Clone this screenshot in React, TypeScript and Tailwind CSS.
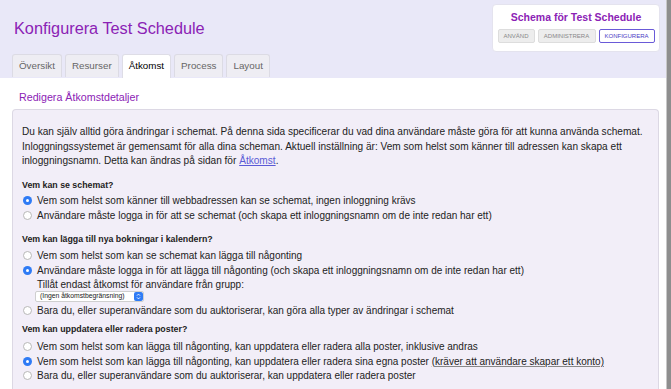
import React from "react";

const font = { fontFamily: '"Liberation Sans", Arial, sans-serif' };

function Radio({ checked }: { checked?: boolean }) {
  if (checked) {
    return (
      <span className="flex h-[9px] w-[9px] shrink-0 items-center justify-center rounded-full bg-[#2f7bf5]">
        <span className="h-[3px] w-[3px] rounded-full bg-white" />
      </span>
    );
  }
  return <span className="h-[9px] w-[9px] shrink-0 rounded-full border border-[#b8b8b8] bg-white" />;
}

function Option({ checked, children }: { checked?: boolean; children: React.ReactNode }) {
  return (
    <div className="flex h-[14.5px] items-center gap-[5px] pl-[1px]">
      <Radio checked={checked} />
      <span className="whitespace-nowrap">{children}</span>
    </div>
  );
}

const tabs = ["Översikt", "Resurser", "Åtkomst", "Process", "Layout"];

export default function App() {
  return (
    <div className="flex h-[389px] w-[671px] overflow-hidden bg-white text-[#222]" style={font}>
      <div className="flex w-[666px] flex-col">
        <header className="flex h-[78px] shrink-0 justify-between bg-[#e9e8f8] pl-[12px] pr-[6px]">
          <div className="flex flex-col">
            <h1 className="mt-[19px] pl-[2px] text-[16.3px] leading-[19px] text-[#8b22b5]">Konfigurera Test Schedule</h1>
            <nav className="mt-auto flex gap-[3px]">
              {tabs.map((t) => (
                <div
                  key={t}
                  className={
                    t === "Åtkomst"
                      ? "flex h-[24px] items-center rounded-t-[3px] border border-b-0 border-[#dedde6] bg-white px-[6px] text-[9.8px] text-black"
                      : "flex h-[23px] items-center rounded-t-[3px] border border-b-0 border-[#dcdbe4] bg-[#eeedf3] px-[6px] text-[9.8px] text-[#666]"
                  }
                >
                  {t}
                </div>
              ))}
            </nav>
          </div>
          <div className="mt-[4px] flex h-[48px] w-[168px] flex-col items-center rounded-[4px] border border-[#e4e3ee] bg-white">
            <div className="mt-[5px] text-[10.5px] font-bold leading-[14px] text-[#8b22b5]">Schema för Test Schedule</div>
            <div className="mt-[5px] flex gap-[3px]">
              <span className="flex h-[14px] w-[37px] items-center justify-center rounded-[2px] border border-[#dddddd] bg-[#ededed] text-[6px] text-[#888]">ANVÄND</span>
              <span className="flex h-[14px] w-[58px] items-center justify-center rounded-[2px] border border-[#dddddd] bg-[#ededed] text-[6px] text-[#888]">ADMINISTRERA</span>
              <span className="flex h-[14px] w-[56px] items-center justify-center rounded-[2px] border border-[#6a5ad8] bg-white text-[6px] text-[#4b3cc4]">KONFIGURERA</span>
            </div>
          </div>
        </header>

        <main className="flex flex-1 flex-col pl-[12px] pr-[7px]">
          <h2 className="mt-[12px] pl-[7px] text-[10.7px] leading-[14px] text-[#8b22b5]">Redigera Åtkomstdetaljer</h2>
          <section className="mt-[5px] flex-1 rounded-t-[4px] border border-b-0 border-[#dcd8e4] bg-[#f2eef8] pl-[9px] pt-[15px] text-[10px]">
            <p className="whitespace-nowrap text-[10.1px] leading-[14.5px]">
              Du kan själv alltid göra ändringar i schemat. På denna sida specificerar du vad dina användare måste göra för att kunna använda schemat.
              <br />
              Inloggningssystemet är gemensamt för alla dina scheman. Aktuell inställning är: Vem som helst som känner till adressen kan skapa ett
              <br />
              inloggningsnamn. Detta kan ändras på sidan för <span className="text-[#5b5bd6] underline">Åtkomst</span>.
            </p>

            <h3 className="mt-[9.5px] text-[8.8px] font-bold leading-[14px]">Vem kan se schemat?</h3>
            <div className="mt-[1.5px]">
              <Option checked>Vem som helst som känner till webbadressen kan se schemat, ingen inloggning krävs</Option>
              <Option>Användare måste logga in för att se schemat (och skapa ett inloggningsnamn om de inte redan har ett)</Option>
            </div>

            <h3 className="mt-[9.5px] text-[8.8px] font-bold leading-[14px]">Vem kan lägga till nya bokningar i kalendern?</h3>
            <div className="mt-[2.5px]">
              <Option>Vem som helst som kan se schemat kan lägga till någonting</Option>
              <Option checked>Användare måste logga in för att lägga till någonting (och skapa ett inloggningsnamn om de inte redan har ett)</Option>
              <div className="pl-[15px] leading-[13px]">Tillåt endast åtkomst för användare från grupp:</div>
              <div className="ml-[13px] mt-[0.5px] flex h-[11px] w-[109px] overflow-hidden rounded-[2px] border border-[#cfcfcf] bg-white">
                <span className="flex flex-1 items-center pl-[4px] text-[6.8px] leading-none">(Ingen åtkomstbegränsning)</span>
                <span className="flex w-[9px] items-center justify-center rounded-[2px] bg-[#2f7bf5]">
                  <svg width="5" height="7" viewBox="0 0 5 7" fill="none" stroke="white" strokeWidth="0.9">
                    <path d="M1 2.6 2.5 1.1 4 2.6M1 4.4 2.5 5.9 4 4.4" />
                  </svg>
                </span>
              </div>
              <div className="mt-[1px]">
                <Option>Bara du, eller superanvändare som du auktoriserar, kan göra alla typer av ändringar i schemat</Option>
              </div>
            </div>

            <h3 className="mt-[4.5px] text-[8.8px] font-bold leading-[14px]">Vem kan uppdatera eller radera poster?</h3>
            <div className="mt-[3.5px]">
              <Option>Vem som helst som kan lägga till någonting, kan uppdatera eller radera alla poster, inklusive andras</Option>
              <Option checked>
                Vem som helst som kan lägga till någonting, kan uppdatera eller radera sina egna poster{" "}
                <span className="underline decoration-[#888]">(kräver att användare skapar ett konto)</span>
              </Option>
              <Option>Bara du, eller superanvändare som du auktoriserar, kan uppdatera eller radera poster</Option>
            </div>
          </section>
        </main>
      </div>
      <div className="w-[5px] border-l border-[#c8c8c8] bg-[#8e8e8e]" />
    </div>
  );
}
